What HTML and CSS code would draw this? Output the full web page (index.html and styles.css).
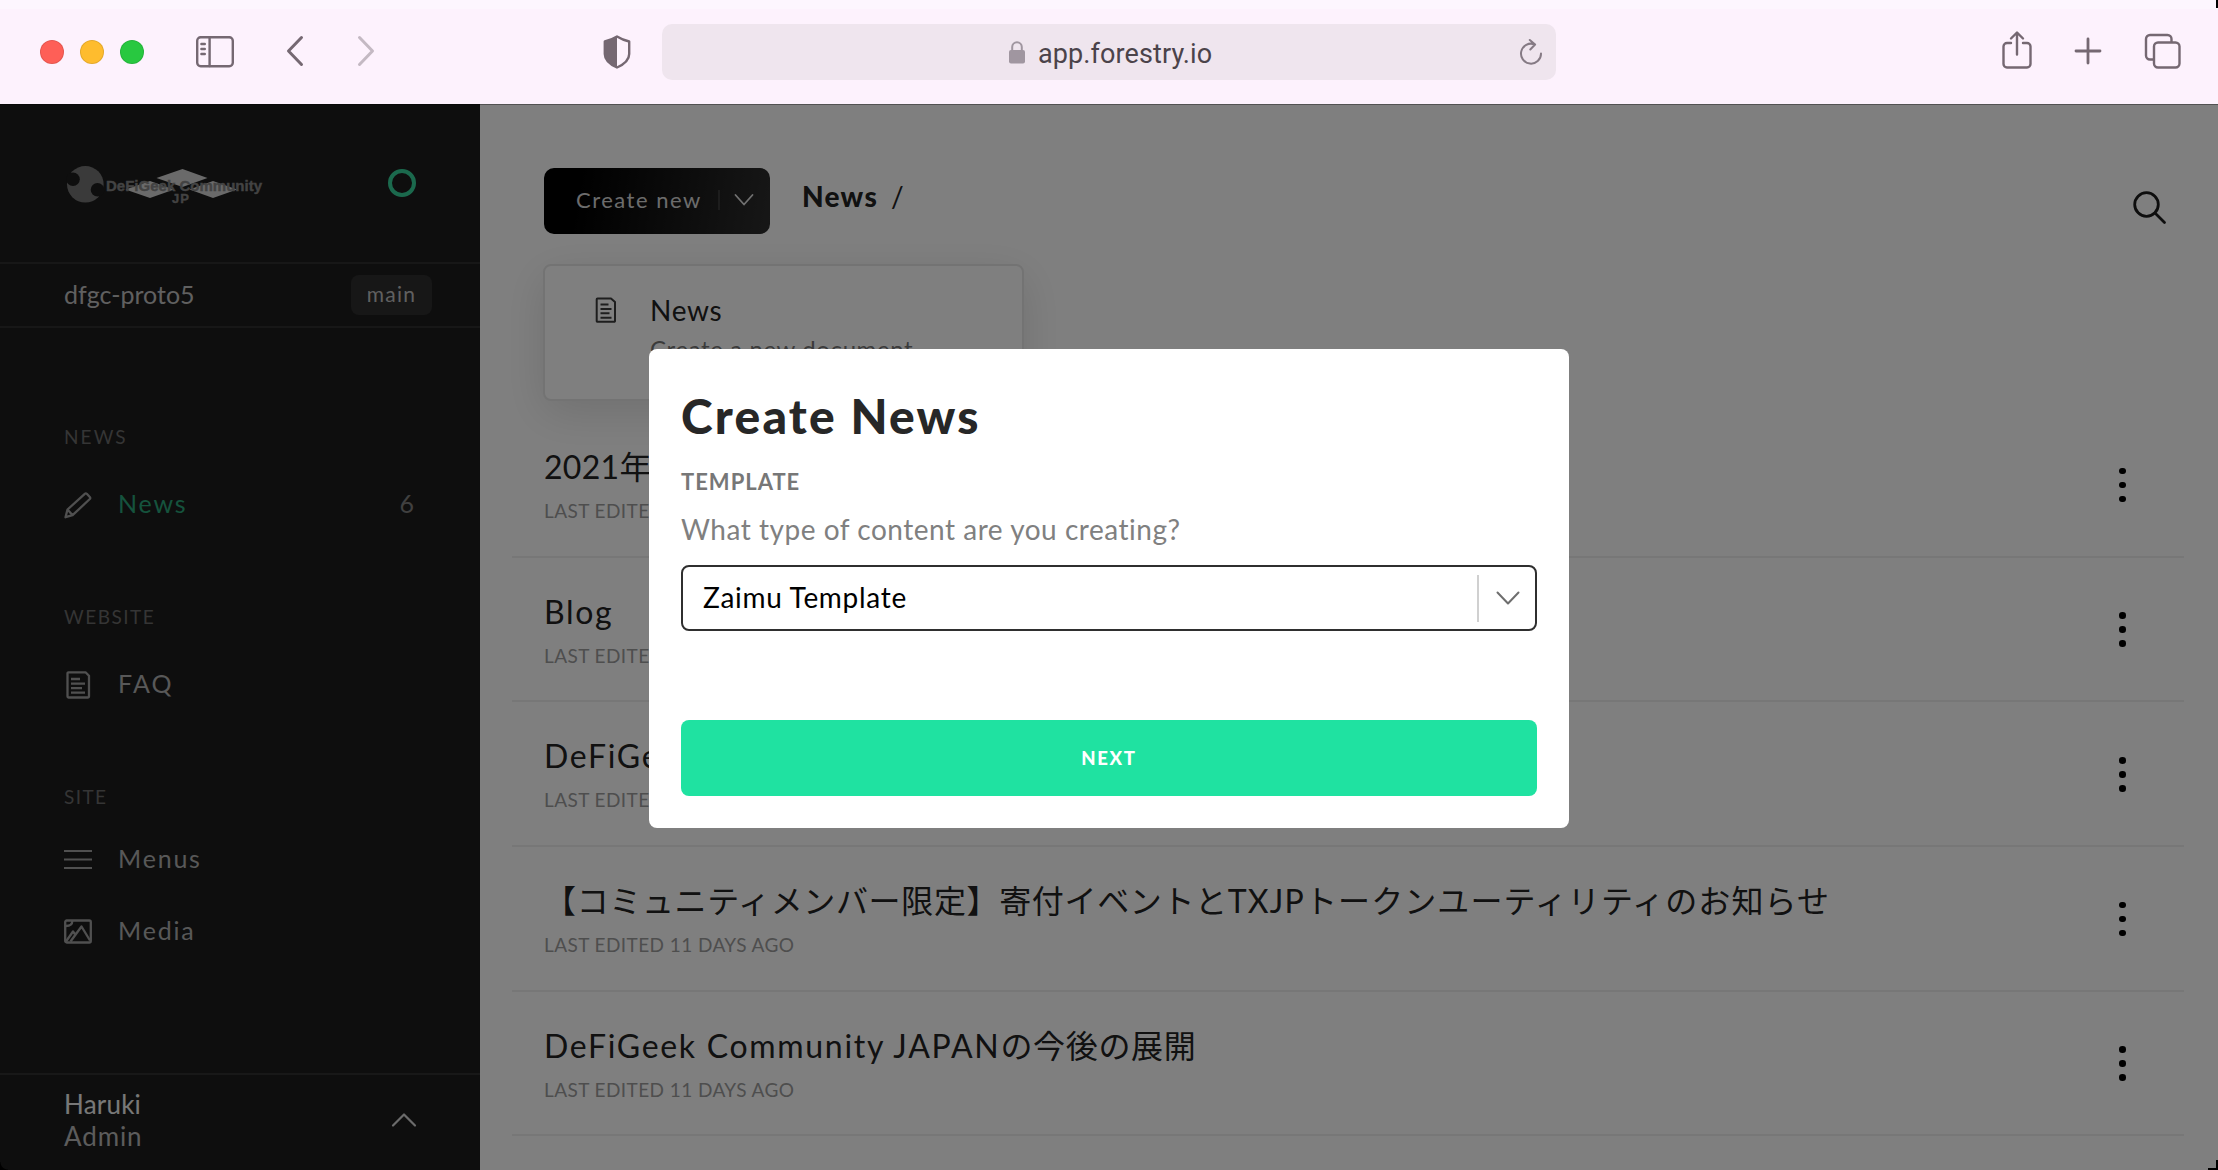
FILE: index.html
```html
<!DOCTYPE html>
<html lang="en">
<head>
<meta charset="utf-8">
<title>Forestry</title>
<link rel="stylesheet" href="styles.css">
</head>
<body>
<div class="window">
  <header class="toolbar">
    <div class="lights"><i class="light red"></i><i class="light yellow"></i><i class="light green"></i></div>
    <svg class="tb-sidebar" width="40" height="32" viewBox="0 0 40 32" fill="none" stroke="#756872" stroke-width="2.4" stroke-linecap="round"><rect x="2.2" y="1.2" width="35.6" height="29" rx="3.5"/><path d="M14.6 1.5V30M6.4 8h3.4M6.4 13h3.4M6.4 18h3.4"/></svg>
    <svg class="tb-back" width="18" height="32" viewBox="0 0 18 32" fill="none" stroke="#756872" stroke-width="3" stroke-linecap="round" stroke-linejoin="round"><path d="M15.5 2.5L2.5 16l13 13.5"/></svg>
    <svg class="tb-forward" width="18" height="32" viewBox="0 0 18 32" fill="none" stroke="#c4b9c3" stroke-width="3" stroke-linecap="round" stroke-linejoin="round"><path d="M2.5 2.5L15.5 16l-13 13.5"/></svg>
    <svg class="tb-shield" width="28" height="34" viewBox="0 0 28 34"><path d="M14 1.5C10 4 6 5.500 1.800 6.500V19c0 6 5.500 10.500 12.200 13.500C20.700 29.500 26.200 25 26.200 19V6.500C22 5.500 18 4 14 1.500z" fill="none" stroke="#756872" stroke-width="2.4" stroke-linejoin="round"/><path d="M14 1.500C10 4 6 5.500 1.800 6.500V19c0 6 5.500 10.500 12.200 13.500z" fill="#756872"/></svg>
    <div class="address">
      <svg class="lock" width="18" height="24" viewBox="0 0 18 24"><path d="M4.200 11V7a4.800 4.800 0 0 1 9.600 0v4" fill="none" stroke="#a096a0" stroke-width="2"/><rect x="1" y="10" width="16" height="13.5" rx="2" fill="#a096a0"/></svg>
      <span class="host">app.forestry.io</span>
      <svg class="reload" width="24" height="28" viewBox="0 0 24 28" fill="none" stroke="#857a84" stroke-width="2" stroke-linecap="round" stroke-linejoin="round"><path d="M15.5 6.300A10 10 0 1 0 22 15.500M10.800 2l5.300 4.500-4.800 5"/></svg>
    </div>
    <svg class="tb-share" width="32" height="40" viewBox="0 0 32 40" fill="none" stroke="#756872" stroke-width="2.4" stroke-linecap="round" stroke-linejoin="round"><path d="M10 13H6a3.500 3.500 0 0 0-3.500 3.500V34A3.500 3.500 0 0 0 6 37.500h20a3.500 3.500 0 0 0 3.500-3.500V16.500A3.500 3.500 0 0 0 26 13h-4M16 24.500V3M10 8.500L16 2.500l6 6"/></svg>
    <svg class="tb-plus" width="28" height="28" viewBox="0 0 28 28" stroke="#756872" stroke-width="2.8" stroke-linecap="round"><path d="M14 2v24M2 14h24"/></svg>
    <svg class="tb-tabs" width="38" height="36" viewBox="0 0 38 36" fill="none" stroke="#756872" stroke-width="2.4"><path d="M10.500 26.500H7A4 4 0 0 1 3 22.500V6A4 4 0 0 1 7 2h17.500A4 4 0 0 1 28.500 6v3.500"/><rect x="11" y="9.5" width="25.5" height="25" rx="4"/></svg>
  </header>

  <div class="app">
    <aside class="sidebar">
      <div class="brand">
        <svg class="logo" width="200" height="42" viewBox="0 0 200 42">
          <circle cx="19.300" cy="20.300" r="18.300" fill="#747474"/><circle cx="7" cy="15.300" r="6.800" fill="#1c1c1c"/><circle cx="31.500" cy="25.800" r="6.800" fill="#1c1c1c"/>
          <g fill="#d4d4d4"><path d="M116.500 5l25 9-25 9-26-9z"/><path d="M84 17l24 8.500L84 34l-24.500-8.500z"/><path d="M147 17l24 8.500L147 34l-23.500-8.500z"/></g>
          <g fill="#868686" stroke="#868686" stroke-width=".4" font-family="Liberation Sans, sans-serif" font-weight="700" font-size="15"><text x="40" y="27" textLength="156">DeFiGeek Community</text><text x="106" y="38.500" font-size="13" textLength="17">JP</text></g>
        </svg>
        <i class="status"></i>
      </div>
      <div class="site"><span class="site-name">dfgc-proto5</span><span class="branch">main</span></div>
      <nav class="nav">
        <section>
          <h2 class="nav-title nt-news">NEWS</h2>
          <a class="nav-item active"><svg width="28" height="28" viewBox="0 0 28 28" fill="none" stroke="#a0a0a0" stroke-width="2.3" stroke-linejoin="round"><path d="M1.500 26.200L3.500 18.500 20.800 2.800a1.500 1.500 0 0 1 2 0L25.800 6a1.500 1.500 0 0 1 0 2L8.600 24.200zM3.500 18.500l5.100 5.700"/></svg><span>News</span><em class="count">6</em></a>
        </section>
        <section>
          <h2 class="nav-title nt-web">WEBSITE</h2>
          <a class="nav-item faq"><svg width="28" height="28" viewBox="0 0 28 28" fill="none" stroke="#a0a0a0" stroke-width="2.3" stroke-linejoin="round"><path d="M4.500 1.300h17L25 4.800v20.700a1 1 0 0 1-1 1H4.500a1 1 0 0 1-1-1V2.300a1 1 0 0 1 1-1zM7 8h9M7 12.600h14M7 17.200h11M7 21.600h14"/></svg><span>FAQ</span></a>
        </section>
        <section class="tight">
          <h2 class="nav-title nt-site">SITE</h2>
          <a class="nav-item"><svg width="28" height="28" viewBox="0 0 28 28" stroke="#a0a0a0" stroke-width="2.200"><path d="M0 5h28M0 13.500h28M0 22h28"/></svg><span>Menus</span></a>
          <a class="nav-item media"><svg width="28" height="28" viewBox="0 0 28 28" fill="none" stroke="#a0a0a0" stroke-width="2.3" stroke-linejoin="round"><rect x="1.200" y="2.500" width="25.600" height="22" rx="1.500"/><path d="M2 23.500l7-10 3 4M6.500 23.500L17.500 8.500l8.500 14M8.300 3c0 3.500-3 5-6.500 5"/></svg><span>Media</span></a>
        </section>
      </nav>
      <div class="user">
        <div><div class="user-name">Haruki</div><div class="user-role">Admin</div></div>
        <svg width="26" height="16" viewBox="0 0 26 16" fill="none" stroke="#d6d6d6" stroke-width="2.200" stroke-linecap="round" stroke-linejoin="round"><path d="M2 13.500L13 2.500l11 11"/></svg>
      </div>
    </aside>

    <main class="main">
      <div class="head">
        <div class="create"><span>Create new</span><svg width="20" height="14" viewBox="0 0 20 14" fill="none" stroke="#e0e0e0" stroke-width="1.800" stroke-linecap="round" stroke-linejoin="round"><path d="M1.500 2L10 11.500 18.500 2"/></svg></div>
        <div class="crumbs"><b>News</b><span>/</span></div>
        <svg class="search" width="34" height="34" viewBox="0 0 34 34" fill="none" stroke="#1c1c1c" stroke-width="2.800" stroke-linecap="round"><circle cx="13.500" cy="13.500" r="11.800"/><path d="M22 22l9.500 9.500"/></svg>
        <div class="menu">
          <svg width="22" height="26" viewBox="0 0 22 26" fill="none" stroke="#3c3c3c" stroke-width="2" stroke-linejoin="round"><path d="M2.500 1.500h13.500L20 5v19a.8.8 0 0 1-.8.8H2.500a.8.8 0 0 1-.8-.8V2.300a.8.8 0 0 1 .8-.8zM5.500 7.500h8M5.500 12h11M5.500 16.300h9M5.500 20.700h11"/></svg>
          <div><div class="menu-title">News</div><div class="menu-text">Create a new document</div></div>
        </div>
      </div>
      <ul class="docs">
        <li><div><h3><span class="year">2021</span><span class="ja">年</span></h3><p>LAST EDITED 11 DAYS AGO</p></div><span class="more"><i></i><i></i><i></i></span></li>
        <li><div><h3>Blog</h3><p>LAST EDITED 11 DAYS AGO</p></div><span class="more"><i></i><i></i><i></i></span></li>
        <li><div><h3>DeFiGeek</h3><p>LAST EDITED 11 DAYS AGO</p></div><span class="more"><i></i><i></i><i></i></span></li>
        <li><div><h3><span class="ja">【コミュニティメンバー限定】寄付イベントと</span><span class="abbr">TXJP</span><span class="ja wide">トークンユーティリティのお知らせ</span></h3><p>LAST EDITED 11 DAYS AGO</p></div><span class="more"><i></i><i></i><i></i></span></li>
        <li><div><h3>DeFiGeek Community JAPAN<span class="ja">の今後の展開</span></h3><p>LAST EDITED 11 DAYS AGO</p></div><span class="more"><i></i><i></i><i></i></span></li>
      </ul>
    </main>

    <div class="overlay"></div>
  </div>

  <div class="modal">
    <h1>Create News</h1>
    <div class="label">TEMPLATE</div>
    <p class="question">What type of content are you creating?</p>
    <div class="select"><span>Zaimu Template</span><i class="sep"></i><svg width="26" height="16" viewBox="0 0 26 16" fill="none" stroke="#6e6e6e" stroke-width="2" stroke-linecap="round" stroke-linejoin="round"><path d="M2.500 2.500L13 13.500l10.500-11"/></svg></div>
    <button class="next">NEXT</button>
  </div>
  <i class="corner top"></i><i class="corner side"></i><i class="corner base"></i><i class="corner left"></i>
</div>
</body>
</html>
```
FILE: styles.css
```css
* { box-sizing: border-box; }
body, h1, h2, h3, p, ul { margin: 0; padding: 0; }
body { font-family: Lato, "Noto Sans CJK JP", sans-serif; background: #000; }
svg { display: block; flex: none; }
i, em { font-style: normal; }

.window { position: relative; width: 2218px; height: 1170px; overflow: hidden; display: flex; flex-direction: column; }

/* Browser toolbar */
.toolbar { height: 104px; flex: none; display: flex; align-items: center; padding: 0 36px 0 40px; background: linear-gradient(#fdf6fe 0 9px, #fdf2fd 9px); }
.lights { display: flex; gap: 16px; }
.light { width: 24px; height: 24px; border-radius: 50%; border: 1px solid rgba(0,0,0,.1); }
.red { background: #fe5f57; }
.yellow { background: #febc2e; }
.green { background: #28c840; }
.tb-sidebar { margin-left: 51px; margin-bottom: 1px; }
.tb-back { margin-left: 51px; margin-bottom: 2px; }
.tb-forward { margin-left: 53px; margin-bottom: 2px; }
.tb-shield { margin-left: 228px; margin-bottom: 1px; }
.address { width: 894px; height: 56px; margin-left: 31px; border-radius: 10px; background: #efe5ee; display: flex; align-items: center; padding: 0 13px 0 346px; }
.host { font: 400 27px/36px Roboto, sans-serif; letter-spacing: .1px; color: #4b434a; margin-left: 12px; flex: 1; padding-top: 3px; }
.tb-share { margin-left: 445px; margin-bottom: 5px; }
.tb-plus { margin-left: 41px; margin-bottom: 3px; }
.tb-tabs { margin-left: 41px; margin-bottom: 2px; }

.app { position: relative; flex: 1; display: flex; min-height: 0; }
.overlay { position: absolute; inset: 0; background: rgba(0,0,0,.5); border-top: 1px solid rgba(0,0,0,.35); }

/* Sidebar */
.sidebar { width: 480px; flex: none; background: #1c1c1c; display: flex; flex-direction: column; }
.brand { height: 158px; display: flex; justify-content: space-between; align-items: flex-start; padding: 60px 64px 0 66px; }
.status { width: 28px; height: 28px; margin-top: 5px; border: 4px solid #36d39b; border-radius: 50%; }
.site { height: 66px; border: solid #2f2f2f; border-width: 2px 0; display: flex; align-items: center; justify-content: space-between; padding: 0 48px 0 64px; color: #c0c0c0; }
.site-name { font-size: 25px; line-height: 30px; letter-spacing: 0; padding-bottom: 2px; }
.branch { width: 81px; height: 40px; border-radius: 8px; background: #2e2e2e; font-size: 21px; line-height: 38px; letter-spacing: 1.2px; text-align: center; }
.nav { flex: 1; padding-top: 97px; display: flex; flex-direction: column; gap: 86px; }
.nav-title { font-weight: 400; font-size: 19px; line-height: 24px; color: #6a6a6a; padding-left: 64px; margin-bottom: 38px; }
.nt-news { letter-spacing: 2.1px; }
.nt-web { letter-spacing: 1.5px; }
.nt-site { letter-spacing: 1.4px; }
.tight .nav-title { margin-bottom: 33px; }
.nav-item { height: 32px; display: flex; align-items: center; padding: 0 66px 0 64px; font-size: 25px; line-height: 32px; letter-spacing: 1.8px; color: #b0b0b0; }
.nav-item svg { margin-top: 3px; }
.nav-item span { margin-left: 26px; flex: 1; }
.active span { color: #2ba67b; }
.faq { letter-spacing: 2.200px; }
.media { margin-top: 40px; }
.count { color: #808080; letter-spacing: 0; }
.user { height: 97px; border-top: 2px solid #303030; display: flex; align-items: center; justify-content: space-between; padding: 0 63px 6px 64px; font-size: 26px; line-height: 32px; }
.user-name { color: #f0f0f0; letter-spacing: .2px; }
.user-role { color: #b8b8b8; letter-spacing: .9px; }

/* Document list */
.main { flex: 1; background: #fff; color: #222; }
.head { position: relative; height: 309px; padding: 64px 51px 0 64px; display: flex; align-items: flex-start; }
.create { width: 226px; height: 66px; border-radius: 10px; background: linear-gradient(100deg, #000 15%, #2e2e2e); display: flex; align-items: center; justify-content: space-between; padding: 0 16px 2px 32px; font-size: 22px; letter-spacing: 1.5px; color: #d8d8d8; }
.create span { padding-right: 16px; border-right: 2px solid #3a3a3a; line-height: 20px; }
.crumbs { display: flex; gap: 13px; margin: 10px auto 0 32px; font-size: 28px; line-height: 36px; }
.crumbs b { font-weight: 900; letter-spacing: 1.3px; }
.search { margin-top: 23px; }
.menu { position: absolute; left: 63px; top: 160px; width: 481px; height: 137px; border: 2px solid #e6e6e6; border-radius: 8px; background: #fff; box-shadow: 0 12px 44px rgba(0,0,0,.12); display: flex; padding: 24px 50px; }
.menu svg { margin-top: 7px; }
.menu-title { font-size: 28px; line-height: 40px; letter-spacing: .7px; margin-left: 33px; }
.menu-text { font-size: 24px; line-height: 38px; letter-spacing: .6px; margin-left: 33px; color: #777; }
.docs { list-style: none; padding: 0 34px 0 32px; }
.docs li { height: 144.7px; padding: 1px 58px 0 32px; border-bottom: 2px solid #efefef; display: flex; align-items: center; justify-content: space-between; }
.docs h3 { font-weight: 400; font-size: 32px; line-height: 40px; letter-spacing: 1.7px; white-space: nowrap; }
.docs p { font-size: 19px; line-height: 24px; letter-spacing: .42px; margin-top: 12px; color: #9c9c9c; }
.year { letter-spacing: .3px; }
.ja { letter-spacing: .65px; }
.ja.wide { letter-spacing: 1.1px; }
.abbr { letter-spacing: 1.2px; }
.more { display: grid; gap: 7.400px; }
.more i { width: 6.600px; height: 6.600px; border-radius: 50%; background: #000; }

/* Modal */
.modal { position: absolute; left: 649px; top: 349px; width: 920px; height: 479px; padding: 33px 32px 32px; border-radius: 8px; background: #fff; display: flex; flex-direction: column; }
.modal h1 { font-weight: 900; font-size: 48px; line-height: 68px; letter-spacing: 2.2px; color: #272727; }
.label { font-weight: 700; font-size: 22px; line-height: 32px; letter-spacing: 1px; color: #777; margin-top: 16px; }
.question { font-size: 28px; line-height: 40px; letter-spacing: .52px; color: #808080; margin-top: 11px; }
.select { height: 66px; margin-top: 16px; border: 2px solid #2f2f2f; border-radius: 8px; display: flex; align-items: center; padding: 0 14px 0 20px; font-size: 28px; line-height: 40px; letter-spacing: .7px; color: #000; }
.select span { flex: 1; padding-bottom: 2px; }
.sep { width: 2px; height: 47px; background: #d0d0d0; margin-right: 16px; }
.next { height: 76px; margin-top: 89px; border: 0; border-radius: 8px; background: #1fe2a1; color: #fff; font: 900 18.5px/24px Lato, sans-serif; letter-spacing: 1.7px; }

/* Desktop showing at the window corners */
.corner { position: absolute; background: #000; }
.top { right: 0; top: 0; width: 2px; height: 8px; }
.side { right: 0; bottom: 0; width: 2px; height: 10px; }
.base { right: 0; bottom: 0; width: 10px; height: 2px; }
.left { left: 0; bottom: 0; width: 8px; height: 8px; background: radial-gradient(circle at 100% 0, transparent 7px, #000 8px); }
```
